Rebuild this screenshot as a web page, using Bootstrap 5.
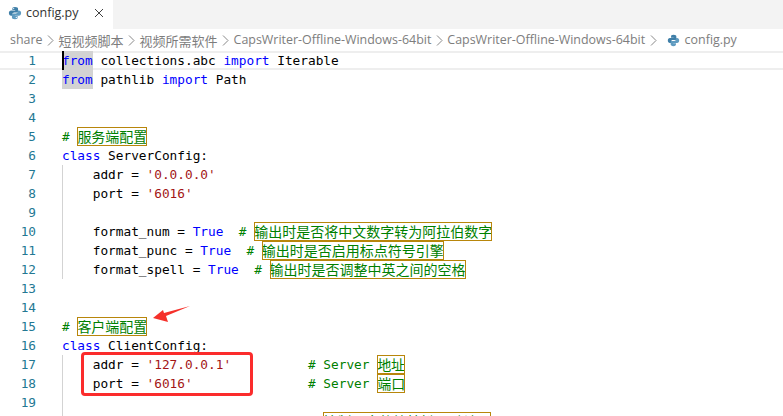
<!DOCTYPE html>
<html lang="zh">
<head>
<meta charset="utf-8">
<link rel="stylesheet" href="https://cdn.jsdelivr.net/npm/bootstrap@5.3.0/dist/css/bootstrap.min.css">
<style>
html,body{height:100%;overflow:hidden;background:#fff}
.vs-page{position:relative;height:416px;overflow:hidden;font-family:"Open Sans","Noto Sans CJK SC",sans-serif}
.vs-tabs{height:29px;background:#f3f3f3}
.vs-tab{width:113px;background:#fff;padding:0 0 3px 8px;color:#333;font-size:12.5px;gap:4px}
.vs-close{margin-left:11px;color:#424242}
.vs-crumbs{height:22px;padding:1px 0 0 10px;color:#7d7d7d;font-size:12.45px;white-space:nowrap;gap:4.5px}
.vs-han{font-family:"Noto Sans CJK SC",sans-serif;font-size:13px}
.vs-chev{flex:none;color:#888}
.vs-crumbicon{margin-left:6px}
.vs-code{font-family:"DejaVu Sans Mono","Noto Sans CJK SC",monospace;font-size:12.77px;color:#000}
.vs-line{height:19px;line-height:19px}
.vs-current{box-shadow:inset 0 2px 0 #eee,inset 0 -2px 0 #eee}
.vs-num{width:62px;flex:none;padding-right:26px;text-align:right;color:#237893}
.vs-text{position:relative;flex:1;min-width:0;white-space:pre}
.vs-guide{box-shadow:inset 1px 0 0 #d3d3d3}
.vs-cursor::before{content:"";position:absolute;left:0;top:0;width:2px;height:19px;background:#000}
.k{color:#0000ff}.s{color:#a31515}.c{color:#008000}
.sel{background:#d3d3d3;display:inline-block;height:19px}
.cjk{font-family:"Noto Sans CJK SC",sans-serif;font-size:14px;color:#008000;outline:1px solid #b8860b;outline-offset:-1px;display:inline-block;height:19px;line-height:18px;vertical-align:top}
.vs-redbox{position:absolute;left:81px;top:352px;width:172px;height:44px;border:3px solid #fb2c2c;border-radius:4px}
.vs-arrow{position:absolute;left:152px;top:304px}
</style>
</head>
<body>
<div class="vs-page">
<div class="vs-tabs d-flex">
<div class="vs-tab d-flex align-items-center">
<svg width="14" height="14" viewBox="0 0 16 16"><path fill="#3f7fa8" d="M8 1C5.500 1 5 2 5 3v1.500h3.200V5H3.500C2 5 1 6.200 1 8s1 3 2.500 3H5V9.500C5 8.300 6 7.500 7 7.500h3c1 0 1.500-.7 1.500-1.500V3c0-1-1-2-3.500-2zM6.500 2.200a.7.7 0 110 1.400.7.7 0 010-1.400z"/><path fill="#5f9bc0" d="M8 15c2.500 0 3-1 3-2v-1.500H7.800V11h4.700C14 11 15 9.800 15 8s-1-3-2.500-3H11v1.500c0 1.200-1 2-2 2H6c-1 0-1.500.7-1.500 1.500v3c0 1 1 2 3.500 2zm1.500-1.200a.7.7 0 110-1.400.7.7 0 010 1.400z"/></svg>
<span>config.py</span>
<svg class="vs-close" width="10" height="10" viewBox="0 0 10 10"><path d="M1 1l8 8M9 1L1 9" stroke="currentColor" stroke-width="1" fill="none"/></svg>
</div>
</div>
<div class="vs-crumbs d-flex align-items-center">
<span>share</span>
<svg class="vs-chev" width="7" height="11" viewBox="0 0 7 11"><path d="M1 .5l5 5-5 5" stroke="currentColor" fill="none"/></svg>
<span class="vs-han">短视频脚本</span>
<svg class="vs-chev" width="7" height="11" viewBox="0 0 7 11"><path d="M1 .5l5 5-5 5" stroke="currentColor" fill="none"/></svg>
<span class="vs-han">视频所需软件</span>
<svg class="vs-chev" width="7" height="11" viewBox="0 0 7 11"><path d="M1 .5l5 5-5 5" stroke="currentColor" fill="none"/></svg>
<span>CapsWriter-Offline-Windows-64bit</span>
<svg class="vs-chev" width="7" height="11" viewBox="0 0 7 11"><path d="M1 .5l5 5-5 5" stroke="currentColor" fill="none"/></svg>
<span>CapsWriter-Offline-Windows-64bit</span>
<svg class="vs-chev" width="7" height="11" viewBox="0 0 7 11"><path d="M1 .5l5 5-5 5" stroke="currentColor" fill="none"/></svg>
<svg class="vs-crumbicon" width="13" height="13" viewBox="0 0 16 16"><path fill="#3f7fa8" d="M8 1C5.500 1 5 2 5 3v1.500h3.200V5H3.500C2 5 1 6.200 1 8s1 3 2.500 3H5V9.500C5 8.300 6 7.500 7 7.500h3c1 0 1.500-.7 1.500-1.500V3c0-1-1-2-3.500-2z"/><path fill="#5f9bc0" d="M8 15c2.500 0 3-1 3-2v-1.500H7.800V11h4.700C14 11 15 9.800 15 8s-1-3-2.500-3H11v1.500c0 1.200-1 2-2 2H6c-1 0-1.500.7-1.500 1.500v3c0 1 1 2 3.500 2z"/></svg>
<span>config.py</span>
</div>
<div class="vs-code">
<div class="vs-line vs-current d-flex"><div class="vs-num">1</div><div class="vs-text vs-cursor"><span class="sel k">from</span> collections.abc <span class="k">import</span> Iterable</div></div>
<div class="vs-line d-flex"><div class="vs-num">2</div><div class="vs-text"><span class="sel k">from</span> pathlib <span class="k">import</span> Path</div></div>
<div class="vs-line d-flex"><div class="vs-num">3</div><div class="vs-text"></div></div>
<div class="vs-line d-flex"><div class="vs-num">4</div><div class="vs-text"></div></div>
<div class="vs-line d-flex"><div class="vs-num">5</div><div class="vs-text"><span class="c"># </span><span class="cjk">服务端配置</span></div></div>
<div class="vs-line d-flex"><div class="vs-num">6</div><div class="vs-text"><span class="k">class</span> ServerConfig:</div></div>
<div class="vs-line d-flex"><div class="vs-num">7</div><div class="vs-text vs-guide">    addr = <span class="s">'0.0.0.0'</span></div></div>
<div class="vs-line d-flex"><div class="vs-num">8</div><div class="vs-text vs-guide">    port = <span class="s">'6016'</span></div></div>
<div class="vs-line d-flex"><div class="vs-num">9</div><div class="vs-text vs-guide"></div></div>
<div class="vs-line d-flex"><div class="vs-num">10</div><div class="vs-text vs-guide">    format_num = <span class="k">True</span>  <span class="c"># </span><span class="cjk">输出时是否将中文数字转为阿拉伯数字</span></div></div>
<div class="vs-line d-flex"><div class="vs-num">11</div><div class="vs-text vs-guide">    format_punc = <span class="k">True</span>  <span class="c"># </span><span class="cjk">输出时是否启用标点符号引擎</span></div></div>
<div class="vs-line d-flex"><div class="vs-num">12</div><div class="vs-text vs-guide">    format_spell = <span class="k">True</span>  <span class="c"># </span><span class="cjk">输出时是否调整中英之间的空格</span></div></div>
<div class="vs-line d-flex"><div class="vs-num">13</div><div class="vs-text"></div></div>
<div class="vs-line d-flex"><div class="vs-num">14</div><div class="vs-text"></div></div>
<div class="vs-line d-flex"><div class="vs-num">15</div><div class="vs-text"><span class="c"># </span><span class="cjk">客户端配置</span></div></div>
<div class="vs-line d-flex"><div class="vs-num">16</div><div class="vs-text"><span class="k">class</span> ClientConfig:</div></div>
<div class="vs-line d-flex"><div class="vs-num">17</div><div class="vs-text vs-guide">    addr = <span class="s">'127.0.0.1'</span>          <span class="c"># Server </span><span class="cjk">地址</span></div></div>
<div class="vs-line d-flex"><div class="vs-num">18</div><div class="vs-text vs-guide">    port = <span class="s">'6016'</span>               <span class="c"># Server </span><span class="cjk">端口</span></div></div>
<div class="vs-line d-flex"><div class="vs-num">19</div><div class="vs-text vs-guide"></div></div>
<div class="vs-line d-flex"><div class="vs-num"></div><div class="vs-text vs-guide">                                  <span class="cjk">控制录音的快捷键，默认是</span></div></div>
</div>
<div class="vs-redbox"></div>
<svg class="vs-arrow" width="40" height="24" viewBox="0 0 40 24"><path fill="#f5302a" d="M1 14L11 6l1 3L38 2 14 12l2 6z"/></svg>
</div>
</body>
</html>
